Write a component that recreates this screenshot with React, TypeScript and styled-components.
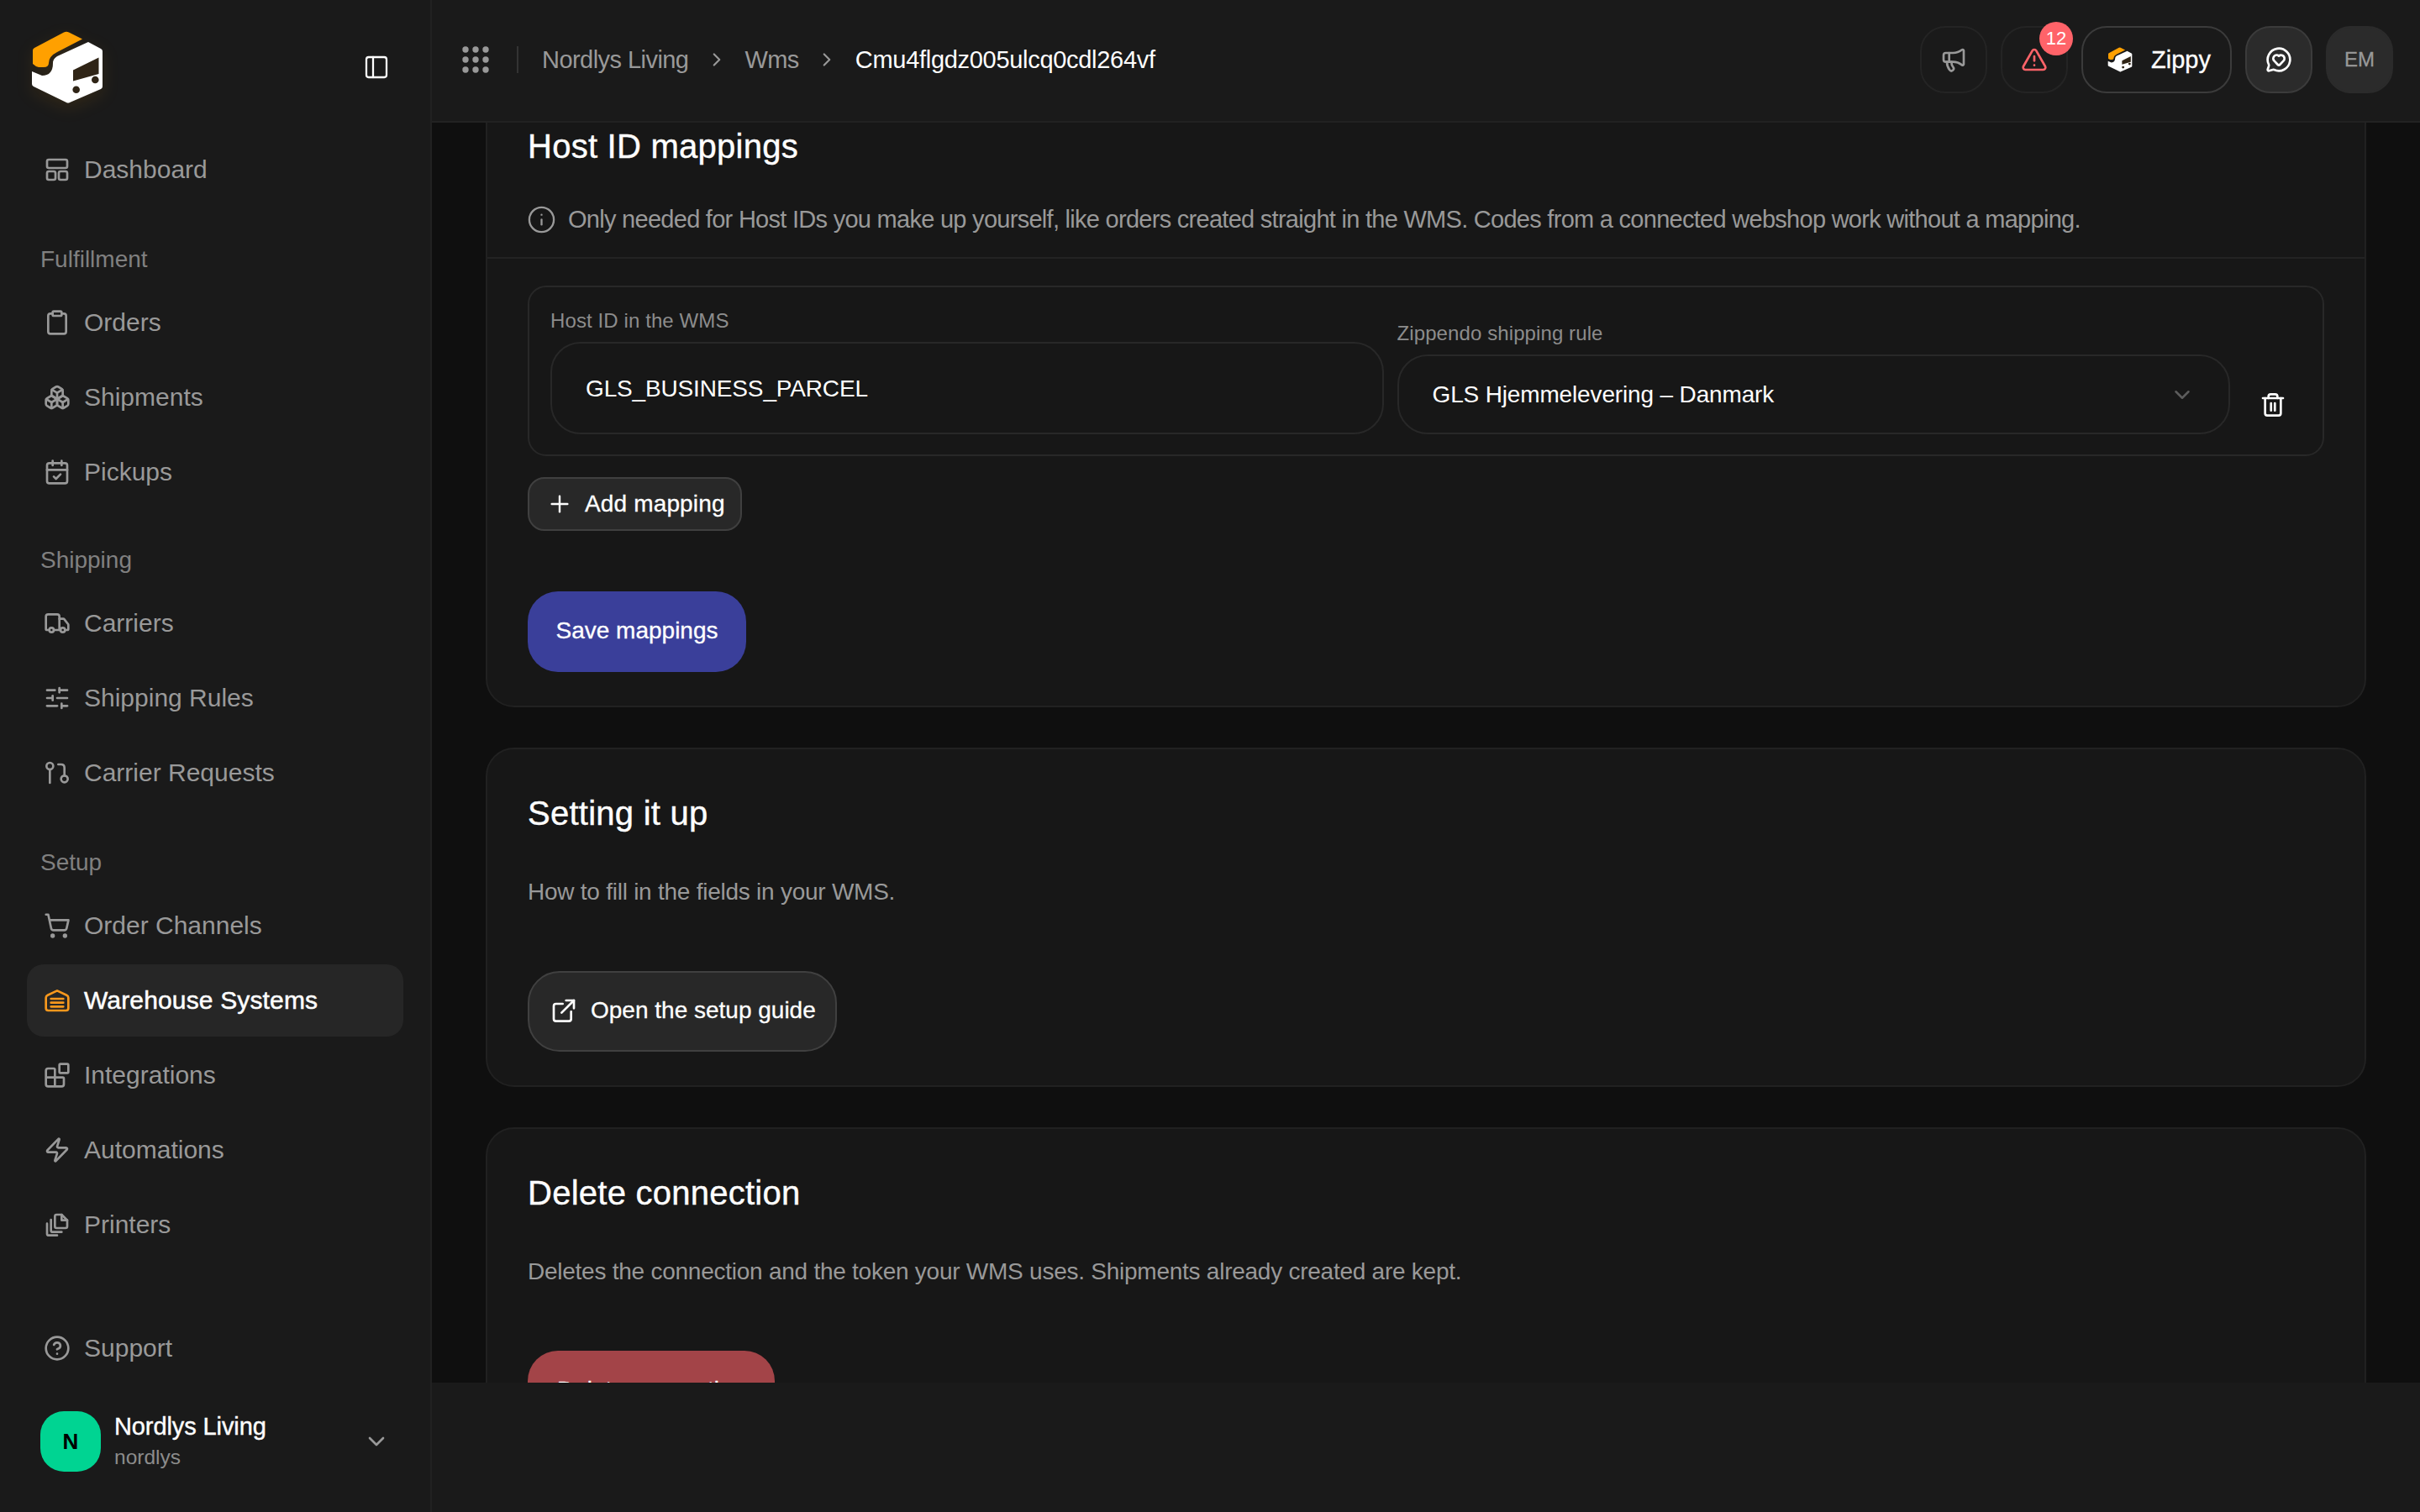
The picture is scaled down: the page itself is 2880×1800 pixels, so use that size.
import React from "react";
import styled, { createGlobalStyle } from "styled-components";
import {
  Clipboard, Boxes, CalendarCheck, Truck, SlidersHorizontal, ShoppingCart, Blocks, Zap,
  CircleHelp, ChevronDown, ChevronRight, PanelLeft, Megaphone, TriangleAlert,
  MessageCircleHeart, Info, Plus,
} from "lucide-react";

const GlobalStyle = createGlobalStyle`
  html, body { margin: 0; padding: 0; background: #1a1a1a; }
  body { font-family: "Liberation Sans", Arial, sans-serif; color: #fff; -webkit-font-smoothing: antialiased; }
  * { box-sizing: border-box; }
  button { font-family: inherit; }
`;

const Page = styled.div`
  width: 2880px;
  height: 1800px;
  display: grid;
  grid-template-columns: 514px 1fr;
  overflow: hidden;
  background: #1a1a1a;
`;

const Sidebar = styled.aside`
  height: 1800px;
  border-right: 2px solid #212121;
  background: #1a1a1a;
  display: flex;
  flex-direction: column;
`;

const Brand = styled.div`
  height: 159px;
  padding: 36px 48px 0 36px;
  display: flex;
  align-items: flex-start;
  justify-content: space-between;
`;

const LogoSvg = styled.svg<{ $glow?: boolean }>`
  display: block;
  flex: none;
  ${(p) => (p.$glow ? "filter: drop-shadow(0 6px 10px rgba(255, 160, 0, 0.1));" : "")}
`;

const CollapseButton = styled.span`
  display: flex;
  width: 32px;
  height: 32px;
  margin-top: 28px;
  color: #fff;
`;

const Nav = styled.nav`
  display: flex;
  flex-direction: column;
  padding: 0 32px;
  flex: 1;
`;

const Group = styled.div<{ $top?: number }>`
  display: flex;
  flex-direction: column;
  gap: 3px;
  margin-top: ${(p) => p.$top ?? 0}px;
`;

const GroupLabel = styled.div`
  height: 34px;
  line-height: 34px;
  margin-bottom: 12px;
  padding-left: 16px;
  font-size: 28px;
  color: #808080;
`;

const NavItem = styled.div<{ $active?: boolean }>`
  height: 86px;
  display: flex;
  align-items: center;
  gap: 16px;
  padding-left: 20px;
  border-radius: 20px;
  font-size: 30px;
  color: ${(p) => (p.$active ? "#fff" : "#999")};
  background: ${(p) => (p.$active ? "#262626" : "transparent")};
  ${(p) => (p.$active ? "-webkit-text-stroke: 0.5px #fff; letter-spacing: 0.15px;" : "")}
  svg { flex: none; color: ${(p) => (p.$active ? "#f7981d" : "#999")}; }
`;

const Bottom = styled.div`
  padding: 0 32px 48px;
  display: flex;
  flex-direction: column;
  gap: 32px;
`;

const Account = styled.div`
  display: flex;
  align-items: center;
  padding-left: 16px;
`;

const Avatar = styled.div`
  width: 72px;
  height: 72px;
  border-radius: 28px;
  background: #00d492;
  color: #000;
  font-size: 26px;
  font-weight: 700;
  display: flex;
  align-items: center;
  justify-content: center;
  flex: none;
`;

const AccountText = styled.div`
  margin-left: 16px;
  flex: 1;
  display: flex;
  flex-direction: column;
  gap: 4px;
`;

const AccountName = styled.div`
  font-size: 29px;
  line-height: 34px;
  letter-spacing: -0.1px;
  color: #fff;
  -webkit-text-stroke: 0.4px #fff;
`;

const AccountSlug = styled.div`
  font-size: 24.5px;
  line-height: 32px;
  color: #8c8c8c;
`;

const AccountChevron = styled.span`
  display: flex;
  color: #999;
  margin-right: 16px;
`;

const Column = styled.div`
  display: flex;
  flex-direction: column;
  height: 1800px;
  min-width: 0;
`;

const TopBar = styled.header`
  height: 146px;
  flex: none;
  border-bottom: 2px solid #222;
  background: #1a1a1a;
  display: flex;
  align-items: center;
  justify-content: space-between;
  padding: 0 32px 2px 36px;
`;

const Crumbs = styled.div`
  display: flex;
  align-items: center;
`;

const Separator = styled.div`
  width: 2px;
  height: 32px;
  background: #333;
  margin: 0 28px 0 33px;
`;

const Crumb = styled.span<{ $current?: boolean }>`
  font-size: 29px;
  letter-spacing: ${(p) => (p.$current ? "-0.3px" : "-0.55px")};
  color: ${(p) => (p.$current ? "#fff" : "#999")};
`;

const CrumbChevron = styled.span`
  display: flex;
  color: #999;
  margin: 0 20.5px;
`;

const Actions = styled.div`
  display: flex;
  align-items: center;
  gap: 16px;
`;

const IconButton = styled.div<{ $variant?: "ghost" | "filled" | "plain" }>`
  position: relative;
  width: 80px;
  height: 80px;
  border-radius: 30px;
  display: flex;
  align-items: center;
  justify-content: center;
  background: ${(p) => (p.$variant === "ghost" ? "#1a1a1a" : "#2b2b2b")};
  border: 2px solid
    ${(p) => (p.$variant === "ghost" ? "#242424" : p.$variant === "plain" ? "#2b2b2b" : "#3b3b3b")};
  color: ${(p) => (p.$variant === "filled" ? "#fff" : "#999")};
  font-size: 24px;
  -webkit-text-stroke: 0.3px #999;
`;

const Badge = styled.span`
  position: absolute;
  top: -7px;
  right: -8px;
  width: 40px;
  height: 40px;
  border-radius: 50%;
  background: #ff6369;
  color: #fff;
  font-size: 22px;
  display: flex;
  align-items: center;
  justify-content: center;
  -webkit-text-stroke: 0;
`;

const ZippyButton = styled.div`
  height: 80px;
  width: 179px;
  border-radius: 30px;
  border: 2px solid #3b3b3b;
  background: #1a1a1a;
  display: flex;
  align-items: center;
  padding-left: 29px;
  gap: 22px;
  font-size: 29px;
  -webkit-text-stroke: 0.3px #fff;
  color: #fff;
`;

const Viewport = styled.main`
  height: 1500px;
  flex: none;
  overflow: hidden;
  background: #0f0f0f;
`;

const Scroller = styled.div`
  margin-top: -49px;
  padding: 0 64px;
  display: flex;
  flex-direction: column;
  gap: 48px;
`;

const Card = styled.section`
  background: #171717;
  border: 2px solid #212121;
  border-radius: 34px;
  flex: none;
`;

const CardHead = styled.div<{ $ruled?: boolean }>`
  padding: ${(p) => (p.$ruled ? "48px 48px 25px" : "49px 48px 0")};
  ${(p) => (p.$ruled ? "border-bottom: 2px solid #232323;" : "")}
`;

const CardTitle = styled.h2`
  margin: 0;
  font-size: 40px;
  line-height: 54px;
  font-weight: 400;
  letter-spacing: 0.25px;
  color: #fff;
  -webkit-text-stroke: 0.4px #fff;
`;

const Description = styled.p`
  margin: 47px 0 0;
  font-size: 28px;
  line-height: 40px;
  letter-spacing: -0.25px;
  color: #999;
`;

const InfoRow = styled.div`
  margin-top: 40px;
  height: 40px;
  display: flex;
  align-items: center;
  gap: 14px;
  font-size: 29px;
  letter-spacing: -0.72px;
  color: #999;
  svg { flex: none; margin-left: -1px; }
`;

const CardBody = styled.div<{ $top: number }>`
  padding: ${(p) => p.$top}px 48px 40px;
  display: flex;
  flex-direction: column;
  align-items: flex-start;
`;

const MappingBox = styled.div`
  width: 100%;
  height: 203px;
  border: 2px solid #282828;
  border-radius: 22px;
  padding: 24px 24px 24px 25px;
  display: flex;
  align-items: flex-end;
  gap: 16px;
`;

const Field = styled.div`
  flex: 1;
  min-width: 0;
  display: flex;
  flex-direction: column;
  gap: 10px;
`;

const FieldLabel = styled.div`
  font-size: 24px;
  line-height: 30px;
  letter-spacing: 0.1px;
  color: #8c8c8c;
`;

const TextBox = styled.div<{ $height: number; $shift: number }>`
  height: ${(p) => p.$height}px;
  border: 2px solid #282828;
  border-radius: 36px;
  display: flex;
  align-items: center;
  justify-content: space-between;
  padding: ${(p) => p.$shift}px 40px 0 40px;
  font-size: 28px;
  letter-spacing: -0.15px;
  color: #fff;
  svg { color: #5c5c5c; flex: none; }
`;

const TrashButton = styled.div`
  width: 70px;
  height: 70px;
  flex: none;
  display: flex;
  align-items: center;
  justify-content: center;
  color: #fff;
`;

const AddButton = styled.button`
  margin-top: 25px;
  height: 64px;
  width: 255px;
  padding: 0 0 0 20px;
  border: 2px solid #404040;
  border-radius: 20px;
  background: #282828;
  color: #fff;
  font-size: 28px;
  letter-spacing: 0.15px;
  -webkit-text-stroke: 0.3px #fff;
  display: flex;
  align-items: center;
  gap: 14px;
`;

const PrimaryButton = styled.button<{ $tone: string; $width: number; $top: number }>`
  margin-top: ${(p) => p.$top}px;
  width: ${(p) => p.$width}px;
  height: 96px;
  border: 0;
  border-radius: 36px;
  padding: 0 0 3px;
  background: ${(p) => p.$tone};
  color: #fff;
  font-size: 28px;
  -webkit-text-stroke: 0.3px #fff;
  flex: none;
`;

const GuideButton = styled.button`
  width: 368px;
  height: 96px;
  padding: 0 0 2px 25px;
  border: 2px solid #404040;
  border-radius: 38px;
  background: #282828;
  color: #fff;
  font-size: 28px;
  -webkit-text-stroke: 0.3px #fff;
  display: flex;
  align-items: center;
  gap: 16px;
  svg { -webkit-text-stroke: 0; }
`;

const FooterBand = styled.div`
  flex: 1;
  background: #1a1a1a;
`;

const Logo = ({ size, glow }: { size: number; glow?: boolean }) => (
  <LogoSvg $glow={glow} width={size} height={size} viewBox="36 36 88 88" aria-hidden>
    <path d="M39 60Q39 58 41 57L76 38.500Q79 37 82 38.500L98 46.500L68 62Q58 67 58 75Q58 80 52 80L46 80Q42 79 39 76Z" fill="#ffa000" />
    <path d="M105 50L120 58Q122 59 122 61L122 103Q122 105 120 106L83 122Q81 123 79 122L40 103Q38 102 38 100L38 85L50 90Q63 90 63 75Q63 70 68 67Z" fill="#fff" />
    <path d="M87 83.500L117.500 68.500V88L87 96.500Z" fill="#2f2416" />
    <ellipse cx="90.700" cy="106.700" rx="4.300" ry="4.300" fill="#2f2416" />
    <ellipse cx="113.300" cy="95" rx="4.300" ry="4.300" fill="#2f2416" />
  </LogoSvg>
);

const Glyph = ({ size = 32, children }: { size?: number; children: React.ReactNode }) => (
  <svg width={size} height={size} viewBox="0 0 24 24" fill="none" stroke="currentColor" strokeWidth={2} strokeLinecap="round" strokeLinejoin="round" aria-hidden>
    {children}
  </svg>
);

const DashboardIcon = () => (
  <Glyph>
    <rect x="3" y="3" width="18" height="7.500" rx="1.500" />
    <rect x="3" y="13.500" width="7.500" height="7.500" rx="1.500" />
    <rect x="13.500" y="13.500" width="7.500" height="7.500" rx="1.500" />
  </Glyph>
);

const RequestIcon = () => (
  <Glyph>
    <circle cx="5.500" cy="6" r="3" />
    <path d="M5.500 9V21" />
    <circle cx="18.500" cy="17.500" r="3" />
    <path d="M18.500 14.500V7.500Q18.500 4.500 15.500 4.500H13" />
  </Glyph>
);

const WarehouseIcon = () => (
  <Glyph>
    <path d="M2 9.500Q2 8 3.500 7.300L12 3.300L20.500 7.300Q22 8 22 9.500V19Q22 21 20 21H4Q2 21 2 19Z" />
    <path d="M6.500 10.500H17.500M6.500 14H17.500M6.500 17.500H17.500" />
  </Glyph>
);

const PrintersIcon = () => (
  <Glyph>
    <path d="M10 4.500Q10 3 11.500 3H16L21 8V13.500Q21 15 19.500 15H11.500Q10 15 10 13.500Z" />
    <path d="M16 3V8H21" />
    <path d="M6.500 7.500V17Q6.500 18.500 8 18.500H16" />
    <path d="M3 11V20Q3 21.500 4.500 21.500H12" />
  </Glyph>
);

const TrashIcon = () => (
  <Glyph>
    <path d="M3 6H21" />
    <path d="M8 6V4.500Q8 2.500 10 2.500H14Q16 2.500 16 4.500V6" />
    <path d="M5 6V19.500Q5 21.500 7 21.500H17Q19 21.500 19 19.500V6" />
    <path d="M10.300 10.500V17M13.700 10.500V17" />
  </Glyph>
);

const OpenIcon = () => (
  <Glyph>
    <path d="M11 6H5Q3 6 3 8V19.500Q3 21.500 5 21.500H16.500Q18.500 21.500 18.500 19.500V13" />
    <path d="M10 14L21 3" />
    <path d="M14 3H21V10" />
  </Glyph>
);

const GripIcon = () => (
  <svg width="32" height="32" viewBox="0 0 32 32" fill="#999" aria-hidden>
    {[4, 16, 28].map((y) => [4, 16, 28].map((x) => <circle key={`${x}-${y}`} cx={x} cy={y} r="3.700" />))}
  </svg>
);

const App = () => (
  <Page>
    <GlobalStyle />
    <Sidebar>
      <Brand>
        <Logo size={88} glow />
        <CollapseButton><PanelLeft size={32} strokeWidth={1.7} /></CollapseButton>
      </Brand>
      <Nav>
        <Group>
          <NavItem><DashboardIcon />Dashboard</NavItem>
        </Group>
        <Group $top={47}>
          <GroupLabel>Fulfillment</GroupLabel>
          <NavItem><Clipboard size={32} />Orders</NavItem>
          <NavItem><Boxes size={32} />Shipments</NavItem>
          <NavItem><CalendarCheck size={32} />Pickups</NavItem>
        </Group>
        <Group $top={45}>
          <GroupLabel>Shipping</GroupLabel>
          <NavItem><Truck size={32} />Carriers</NavItem>
          <NavItem><SlidersHorizontal size={32} />Shipping Rules</NavItem>
          <NavItem><RequestIcon />Carrier Requests</NavItem>
        </Group>
        <Group $top={47}>
          <GroupLabel>Setup</GroupLabel>
          <NavItem><ShoppingCart size={32} />Order Channels</NavItem>
          <NavItem $active><WarehouseIcon />Warehouse Systems</NavItem>
          <NavItem><Blocks size={32} />Integrations</NavItem>
          <NavItem><Zap size={32} />Automations</NavItem>
          <NavItem><PrintersIcon />Printers</NavItem>
        </Group>
      </Nav>
      <Bottom>
        <NavItem><CircleHelp size={32} />Support</NavItem>
        <Account>
          <Avatar>N</Avatar>
          <AccountText>
            <AccountName>Nordlys Living</AccountName>
            <AccountSlug>nordlys</AccountSlug>
          </AccountText>
          <AccountChevron><ChevronDown size={32} /></AccountChevron>
        </Account>
      </Bottom>
    </Sidebar>
    <Column>
      <TopBar>
        <Crumbs>
          <GripIcon />
          <Separator />
          <Crumb>Nordlys Living</Crumb>
          <CrumbChevron><ChevronRight size={26} /></CrumbChevron>
          <Crumb>Wms</Crumb>
          <CrumbChevron><ChevronRight size={26} /></CrumbChevron>
          <Crumb $current>Cmu4flgdz005ulcq0cdl264vf</Crumb>
        </Crumbs>
        <Actions>
          <IconButton $variant="ghost"><Megaphone size={32} /></IconButton>
          <IconButton $variant="ghost">
            <TriangleAlert size={32} color="#ff6369" />
            <Badge>12</Badge>
          </IconButton>
          <ZippyButton><Logo size={30} />Zippy</ZippyButton>
          <IconButton $variant="filled"><MessageCircleHeart size={32} /></IconButton>
          <IconButton $variant="plain">EM</IconButton>
        </Actions>
      </TopBar>
      <Viewport>
        <Scroller>
          <Card>
            <CardHead $ruled>
              <CardTitle>Host ID mappings</CardTitle>
              <InfoRow>
                <Info size={35} strokeWidth={1.6} />
                Only needed for Host IDs you make up yourself, like orders created straight in the WMS. Codes from a connected webshop work without a mapping.
              </InfoRow>
            </CardHead>
            <CardBody $top={32}>
              <MappingBox>
                <Field>
                  <FieldLabel>Host ID in the WMS</FieldLabel>
                  <TextBox $height={110} $shift={2}>GLS_BUSINESS_PARCEL</TextBox>
                </Field>
                <Field>
                  <FieldLabel>Zippendo shipping rule</FieldLabel>
                  <TextBox $height={95} $shift={0}>
                    GLS Hjemmelevering – Danmark
                    <ChevronDown size={30} />
                  </TextBox>
                </Field>
                <TrashButton><TrashIcon /></TrashButton>
              </MappingBox>
              <AddButton><Plus size={32} strokeWidth={1.8} />Add mapping</AddButton>
              <PrimaryButton $tone="#3a3f9a" $width={260} $top={72}>Save mappings</PrimaryButton>
            </CardBody>
          </Card>
          <Card>
            <CardHead>
              <CardTitle>Setting it up</CardTitle>
              <Description>How to fill in the fields in your WMS.</Description>
            </CardHead>
            <CardBody $top={74}>
              <GuideButton><OpenIcon />Open the setup guide</GuideButton>
            </CardBody>
          </Card>
          <Card>
            <CardHead>
              <CardTitle>Delete connection</CardTitle>
              <Description>Deletes the connection and the token your WMS uses. Shipments already created are kept.</Description>
            </CardHead>
            <CardBody $top={74}>
              <PrimaryButton $tone="#a34448" $width={294} $top={0}>Delete connection</PrimaryButton>
            </CardBody>
          </Card>
        </Scroller>
      </Viewport>
      <FooterBand />
    </Column>
  </Page>
);

export default App;
